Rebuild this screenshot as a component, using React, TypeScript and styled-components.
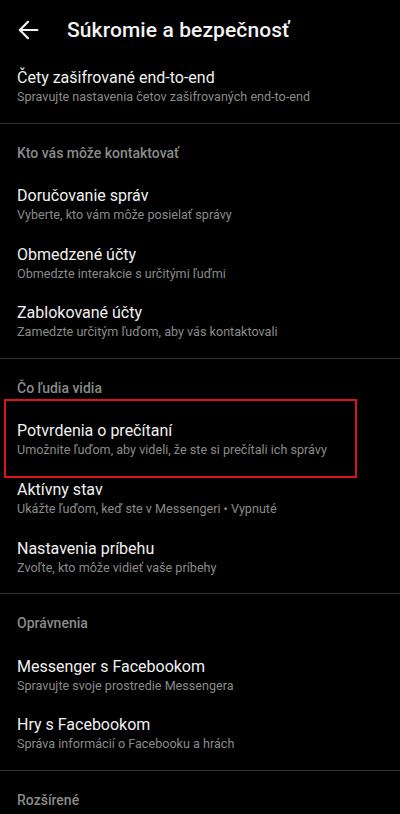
import React from "react";
import styled, { createGlobalStyle } from "styled-components";

const GlobalStyle = createGlobalStyle`
  html, body {
    margin: 0;
    padding: 0;
    background: #000;
  }
  body {
    font-family: Roboto, "Noto Sans", "Liberation Sans", sans-serif;
    -webkit-font-smoothing: antialiased;
  }
`;

type Item = { title: string; sub: string; marked?: boolean };
type Section = { header?: string; items: Item[] };

const sections: Section[] = [
  {
    items: [
      {
        title: "Čety zašifrované end-to-end",
        sub: "Spravujte nastavenia četov zašifrovaných end-to-end",
      },
    ],
  },
  {
    header: "Kto vás môže kontaktovať",
    items: [
      { title: "Doručovanie správ", sub: "Vyberte, kto vám môže posielať správy" },
      { title: "Obmedzené účty", sub: "Obmedzte interakcie s určitými ľuďmi" },
      { title: "Zablokované účty", sub: "Zamedzte určitým ľuďom, aby vás kontaktovali" },
    ],
  },
  {
    header: "Čo ľudia vidia",
    items: [
      {
        title: "Potvrdenia o prečítaní",
        sub: "Umožnite ľuďom, aby videli, že ste si prečítali ich správy",
        marked: true,
      },
      { title: "Aktívny stav", sub: "Ukážte ľuďom, keď ste v Messengeri • Vypnuté" },
      { title: "Nastavenia príbehu", sub: "Zvoľte, kto môže vidieť vaše príbehy" },
    ],
  },
  {
    header: "Oprávnenia",
    items: [
      { title: "Messenger s Facebookom", sub: "Spravujte svoje prostredie Messengera" },
      { title: "Hry s Facebookom", sub: "Správa informácií o Facebooku a hrách" },
    ],
  },
  { header: "Rozšírené", items: [] },
];

const App = () => {
  return (
    <Screen>
      <GlobalStyle />
      <TopBar>
        <BackButton aria-label="Späť">
          <svg width="28" height="28" viewBox="0 0 24 24" fill="none">
            <path
              d="M20 12H5.5M12 5l-7 7 7 7"
              stroke="#f2f2f2"
              strokeWidth="1.9"
              strokeLinecap="round"
              strokeLinejoin="round"
            />
          </svg>
        </BackButton>
        <Title>Súkromie a bezpečnosť</Title>
      </TopBar>
      {sections.map((section, i) => (
        <Group key={i} $first={i === 0}>
          {section.header && <GroupHeader>{section.header}</GroupHeader>}
          {section.items.map((item) => (
            <Row key={item.title}>
              <RowTitle>{item.title}</RowTitle>
              <RowSub>{item.sub}</RowSub>
              {item.marked && <Highlight />}
            </Row>
          ))}
        </Group>
      ))}
    </Screen>
  );
};

export default App;

const Screen = styled.div`
  width: 400px;
  height: 814px;
  overflow: hidden;
  background: #000;
  color: #f0f0f0;
`;

const TopBar = styled.div`
  height: 58px;
  display: flex;
  align-items: center;
`;

const BackButton = styled.div`
  width: 28px;
  height: 28px;
  margin-left: 14px;
  margin-top: 1px;
  display: flex;
  align-items: center;
  justify-content: center;
`;

const Title = styled.div`
  margin-left: 25px;
  font-size: 21px;
  font-weight: 500;
  color: #f2f2f2;
  letter-spacing: 0.1px;
  margin-top: 1px;
`;

const Group = styled.div<{ $first?: boolean }>`
  border-top: ${(p) => (p.$first ? "none" : "1px solid #333")};
  margin-top: ${(p) => (p.$first ? "0" : "6px")};
`;

const GroupHeader = styled.div`
  padding: 19px 17px 13.5px;
  font-size: 14px;
  line-height: 20px;
  font-weight: 500;
  color: #8a8a8a;
`;

const Row = styled.div`
  position: relative;
  height: 58.6px;
  box-sizing: border-box;
  padding: 10px 17px 0;
`;

const RowTitle = styled.div`
  font-size: 16px;
  line-height: 20px;
  color: #f0f0f0;
`;

const RowSub = styled.div`
  font-size: 12.6px;
  line-height: 18px;
  color: #8a8a8a;
  white-space: nowrap;
`;

const Highlight = styled.div`
  position: absolute;
  left: 4px;
  width: 353px;
  top: -12px;
  bottom: -8px;
  box-sizing: border-box;
  border: 2px solid #d6161c;
  pointer-events: none;
`;
